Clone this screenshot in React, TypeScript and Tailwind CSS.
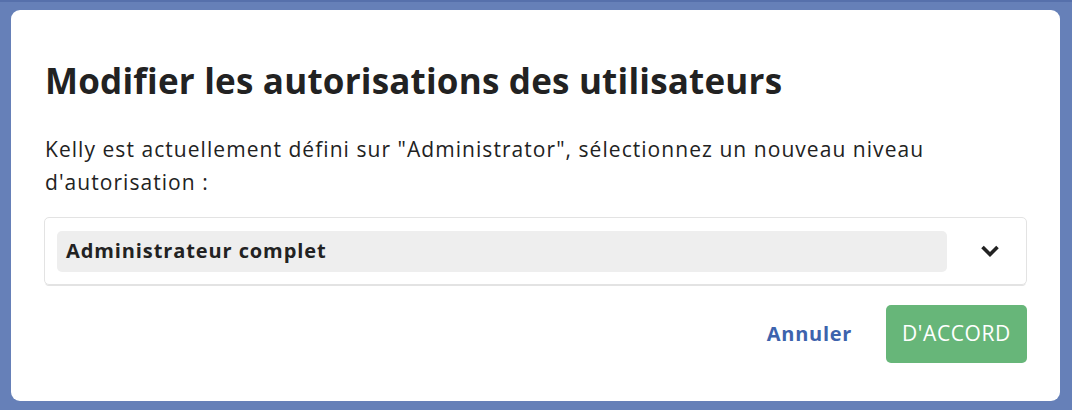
import React from "react";

export default function App() {
  return (
    <div
      className="w-[1072px] h-[410px] bg-[#6680b8] border-t-2 border-[#5670ab] pt-[8px] pl-[11px] overflow-hidden"
      style={{ fontFamily: '"Open Sans", "Noto Sans", sans-serif' }}
    >
      <div className="w-[1049px] h-[391px] bg-white rounded-[9px] px-[33px] pt-[49px] flex flex-col">
        <h1 className="ml-[1px] text-[35px] leading-[44px] font-bold text-[#222] tracking-[0.2px]">
          Modifier les autorisations des utilisateurs
        </h1>
        <p className="ml-[1px] mt-[30px] text-[21px] leading-[33px] text-[#222] tracking-[1.05px]">
          Kelly est actuellement défini sur "Administrator", sélectionnez un nouveau niveau d'autorisation :
        </p>
        <div className="mt-[18px] h-[68px] border border-[#e3e3e3] rounded-[5px] shadow-[0_2px_0_-1px_#e3e3e3] flex items-center pl-[12px]">
          <div className="flex-1 h-[41px] bg-[#eeeeee] rounded-[5px] flex items-center pl-[9px] text-[20px] font-bold text-[#222] tracking-[0.9px]">
            Administrateur complet
          </div>
          <div className="w-[79px] flex items-center pl-[33px]">
            <svg width="20" height="14" viewBox="0 0 20 14">
              <path d="M2.5 3 L10 10.5 L17.5 3" fill="none" stroke="#222" strokeWidth="3.6" />
            </svg>
          </div>
        </div>
        <div className="mt-[20px] flex justify-end items-center gap-[34px]">
          <button className="text-[20px] font-bold text-[#3d63ad] tracking-[0.7px]">Annuler</button>
          <button className="w-[141px] h-[58px] bg-[#67b679] rounded-[5px] text-white text-[21px] tracking-[0.6px]">
            D'ACCORD
          </button>
        </div>
      </div>
    </div>
  );
}
